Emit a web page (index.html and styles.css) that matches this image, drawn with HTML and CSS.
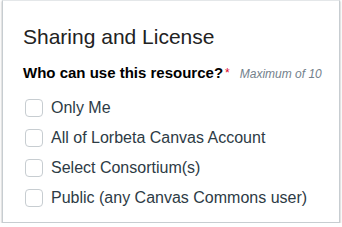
FILE: index.html
```html
<!DOCTYPE html>
<html lang="en">
<head>
    <meta charset="UTF-8">
    <meta name="viewport" content="width=device-width, initial-scale=1.0">
    <title>Sharing and License</title>
    <link rel="stylesheet" href="styles.css">
</head>
<body>
    <div class="card">
        <h2 class="card-title">Sharing and License</h2>

        <div class="question">
            <span class="question-label">Who can use this resource?</span><span class="required">*</span>
            <span class="hint">Maximum of 10</span>
        </div>

        <ul class="options">
            <li class="option"><span class="checkbox"></span><span class="option-text">Only Me</span></li>
            <li class="option"><span class="checkbox"></span><span class="option-text">All of Lorbeta Canvas Account</span></li>
            <li class="option"><span class="checkbox"></span><span class="option-text">Select Consortium(s)</span></li>
            <li class="option"><span class="checkbox"></span><span class="option-text">Public (any Canvas Commons user)</span></li>
        </ul>
    </div>
</body>
</html>
```

FILE: styles.css
```css
body {
    margin: 0;
    background-color: #ffffff;
    color: #2d3b45;
    font-family: "Liberation Sans", Arial, sans-serif;
}

.card {
    width: 338px;
    height: 223px;
    margin-left: 2px;
    box-sizing: border-box;
    border: 1px solid #c7cdd1;
    border-top-color: #e4e7e9;
    box-shadow: 0 1px 2px rgba(0, 0, 0, 0.35);
    padding: 0 0 0 20px;
    overflow: hidden;
}

.card-title {
    margin: 24px 0 0;
    font-size: 21px;
    font-weight: normal;
    line-height: 24px;
    color: #222222;
}

/* question line with the required mark and hint */
.question {
    margin-top: 14px;
    display: flex;
    align-items: baseline;
    white-space: nowrap;
    line-height: 20px;
}
.question-label {
    font-size: 15px;
    font-weight: bold;
    color: #000000;
}
.required {
    color: #e0061f;
    font-size: 12px;
    margin-left: 2px;
    align-self: flex-start;
}
.hint {
    margin-left: 10px;
    font-size: 12px;
    font-style: italic;
    color: #73818c;
}

.options {
    list-style: none;
    margin: 9px 0 0;
    padding: 0;
}
.option {
    display: flex;
    align-items: center;
    height: 30px;
}
.checkbox {
    width: 18px;
    height: 18px;
    box-sizing: border-box;
    border: 1px solid #c7cdd1;
    border-radius: 4px;
    background-color: #ffffff;
    margin-left: 2px;
}
.option-text {
    margin-left: 8px;
    font-size: 16px;
    color: #2d3b45;
}
```
